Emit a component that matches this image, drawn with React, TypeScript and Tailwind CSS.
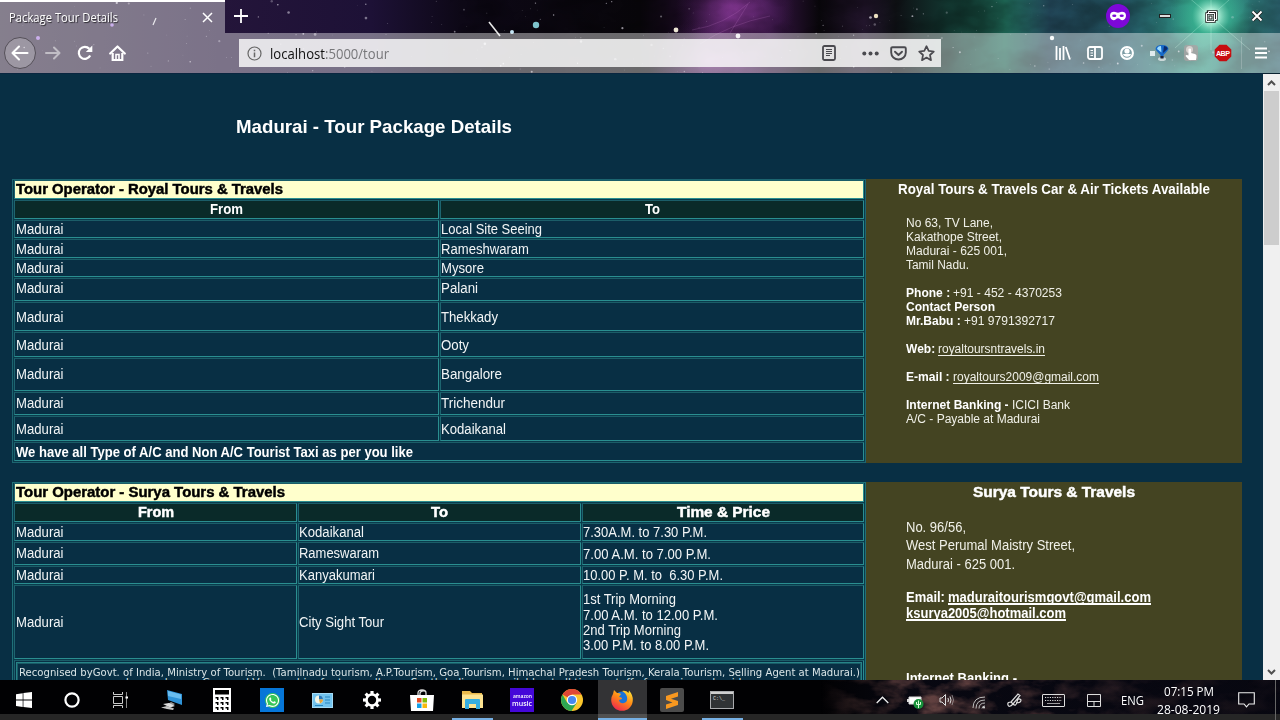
import { useLayoutEffect, useRef, useState, type ReactNode } from 'react';
import { FaWhatsapp } from 'react-icons/fa';

/** Inline text that is condensed or expanded so that it takes up `w` pixels. */
function Fit({ w, className = '', children }: { w: number; className?: string; children: string }) {
  const ref = useRef<HTMLSpanElement>(null);
  const [natural, setNatural] = useState(w);
  useLayoutEffect(() => {
    const el = ref.current;
    if (!el) return;
    const applied = el.style.transform;
    el.style.transform = 'none';
    setNatural(el.getBoundingClientRect().width);
    el.style.transform = applied;
  }, [w, children]);
  return (
    <span
      ref={ref}
      className={`inline-block origin-left whitespace-pre ${className}`}
      style={{ transform: `scaleX(${w / natural})`, marginRight: `${w - natural}px` }}
    >
      {children}
    </span>
  );
}

function makeStars(count: number, seed: number, width: number, height: number) {
  let s = seed;
  const next = () => {
    s = (s * 16807) % 2147483647;
    return s / 2147483647;
  };
  return Array.from({ length: count }, () => ({
    x: next() * width,
    y: next() * height,
    r: 0.3 + Math.pow(next(), 4) * 1.1,
    o: 0.25 + next() * 0.5,
  }));
}
const stars = makeStars(230, 4217, 1280, 73);

function Galaxy() {
  return (
    <svg className="absolute inset-0 h-full w-full" viewBox="0 0 1280 73" preserveAspectRatio="none" aria-hidden="true">
      <defs>
        <linearGradient id="sky" x1="0" x2="1" y1="0" y2="0">
          <stop offset="0" stopColor="#352a42" />
          <stop offset="0.17" stopColor="#24153a" />
          <stop offset="0.29" stopColor="#1d1136" />
          <stop offset="0.36" stopColor="#0d0816" />
          <stop offset="0.5" stopColor="#08060a" />
          <stop offset="0.54" stopColor="#1c0b24" />
          <stop offset="0.575" stopColor="#5a2368" />
          <stop offset="0.605" stopColor="#331440" />
          <stop offset="0.64" stopColor="#08060a" />
          <stop offset="0.675" stopColor="#22152c" />
          <stop offset="0.7" stopColor="#0e1014" />
          <stop offset="0.74" stopColor="#12352f" />
          <stop offset="0.785" stopColor="#1f6a58" />
          <stop offset="0.82" stopColor="#224658" />
          <stop offset="0.88" stopColor="#265c6a" />
          <stop offset="0.94" stopColor="#2f9480" />
          <stop offset="1" stopColor="#2c6470" />
        </linearGradient>
        <radialGradient id="glow">
          <stop offset="0" stopColor="#ffffff" />
          <stop offset="0.15" stopColor="#c8ffe8" stopOpacity="0.9" />
          <stop offset="0.45" stopColor="#3fc79c" stopOpacity="0.5" />
          <stop offset="1" stopColor="#3fc79c" stopOpacity="0" />
        </radialGradient>
        <radialGradient id="violet">
          <stop offset="0" stopColor="#b04cc0" stopOpacity="0.5" />
          <stop offset="1" stopColor="#6a2a80" stopOpacity="0" />
        </radialGradient>
        <filter id="clouds" x="0" y="0" width="100%" height="100%">
          <feTurbulence type="fractalNoise" baseFrequency="0.018 0.03" numOctaves="4" seed="8" />
          <feColorMatrix values="0 0 0 0 0  0 0 0 0 0  0 0 0 0 0  2.6 0 0 0 -1" />
        </filter>
      </defs>
      <rect width="1280" height="73" fill="url(#sky)" />
      <ellipse cx="735" cy="10" rx="60" ry="46" fill="url(#violet)" />
      <ellipse cx="708" cy="62" rx="60" ry="42" fill="url(#violet)" />
      <rect x="450" width="830" height="73" filter="url(#clouds)" opacity="0.32" />
      <g stroke="#d78be0" strokeOpacity="0.18" fill="none">
        <path d="M692 30 Q725 25 750 2M700 44 Q730 24 770 16M730 33 L748 4" />
      </g>
      <circle cx="1211" cy="16" r="42" fill="url(#glow)" />
      <path d="M1175 48L1247 -16M1180 -10L1250 50M1211 0V50" stroke="#bfffe6" strokeOpacity="0.3" />
      {stars.map((p, i) => (
        <circle key={i} cx={p.x} cy={p.y} r={p.r} fill="#e8e4f0" opacity={p.o} />
      ))}
      <path d="M489 22L500 36" stroke="#e8e8e8" strokeWidth="1.6" />
      <path d="M153 25L156 18" stroke="#dddde4" strokeWidth="1.2" />
      <circle cx="536" cy="25" r="3.2" fill="#7fc4cc" />
      <circle cx="512" cy="32" r="2" fill="#c3e4f4" />
      <circle cx="676" cy="30" r="2.4" fill="#ece6d4" />
      <circle cx="738" cy="36" r="2.4" fill="#efe8ee" />
      <circle cx="876" cy="16" r="2.2" fill="#ece0c0" />
      <circle cx="1052" cy="38" r="2.2" fill="#f4f8f8" />
      <circle cx="38" cy="38" r="2" fill="#a97be0" />
      <circle cx="112" cy="25" r="1.8" fill="#a97be0" />
    </svg>
  );
}

function TabStrip() {
  return (
    <div className="relative flex h-[33px]">
      <div className="flex h-full w-[225px] items-center border-t-2 border-white bg-white/40 pl-[9px] text-[12px] text-white">
        <Fit w={109} className="font-['Open_Sans',sans-serif] [text-shadow:1px_1px_1px_#000a]">Package Tour Details</Fit>
        <svg className="ml-auto mr-[12px]" width="11" height="11" viewBox="0 0 11 11" stroke="#fff" strokeWidth="1.5">
          <path d="M1 1L10 10M10 1L1 10" />
        </svg>
      </div>
      <svg className="ml-[9px] mt-[9px]" width="14" height="14" viewBox="0 0 14 14" stroke="#fff" strokeWidth="1.8">
        <path d="M7 0V14M0 7H14" />
      </svg>
      <div className="ml-auto flex h-[32px] items-center">
        <div className="flex w-12 justify-center">
          <svg width="24" height="24" viewBox="0 0 24 24">
            <circle cx="12" cy="12" r="12" fill="#7d08d8" />
            <path d="M4 11.500C4 8.700 6 7.800 8 7.800c1.700 0 2.600.9 4 .9s2.300-.9 4-.9c2 0 4 .9 4 3.700 0 2.700-1.400 4.700-3.600 4.700-2 0-2.700-2-4.400-2s-2.400 2-4.400 2C5.400 16.200 4 14.200 4 11.500z" fill="#fff" />
            <ellipse cx="8.300" cy="11.800" rx="2.100" ry="1.300" fill="#7d08d8" />
            <ellipse cx="15.700" cy="11.800" rx="2.100" ry="1.300" fill="#7d08d8" />
          </svg>
        </div>
        <div className="flex w-[46px] justify-center">
          <svg width="12" height="4" viewBox="0 0 12 4"><rect x="0.500" y="0.500" width="11" height="3" fill="#ddd" stroke="#222" /></svg>
        </div>
        <div className="flex w-[46px] justify-center">
          <svg width="13" height="13" viewBox="0 0 13 13" fill="none">
            <path d="M3 3V1.500H11.500V9.500H10M1.500 3.500H9.500V11.500H1.500z" stroke="#222" strokeWidth="2.400" />
            <path d="M3.500 3V1.500H11.500V9.500H10M1.500 3.500H9.500V11.500H1.500z" stroke="#fff" strokeWidth="1" />
            <rect x="4" y="6" width="3" height="3" stroke="#222" fill="#fff" />
          </svg>
        </div>
        <div className="flex w-[46px] justify-center">
          <svg width="12" height="12" viewBox="0 0 12 12">
            <path d="M1.500 1.500L10.500 10.500M10.500 1.500L1.500 10.500" stroke="#222" strokeWidth="3.600" />
            <path d="M1.500 1.500L10.500 10.500M10.500 1.500L1.500 10.500" stroke="#fff" strokeWidth="1.900" />
          </svg>
        </div>
      </div>
    </div>
  );
}

function Slot({ children }: { children: ReactNode }) {
  return <div className="flex w-8 shrink-0 justify-center">{children}</div>;
}

function Toolbar() {
  return (
    <div className="relative flex h-10 items-center bg-white/40 text-white">
      <div className="flex items-center pl-1">
        <div className="flex size-8 items-center justify-center rounded-full border border-[#555059] bg-white/20">
          <svg width="18" height="16" viewBox="0 0 18 16" fill="none" stroke="#fff" strokeWidth="2.100" strokeLinecap="round" strokeLinejoin="round">
            <path d="M16.500 8H2M8 1.500L1.500 8L8 14.500" />
          </svg>
        </div>
        <div className="w-px" />
        <Slot>
          <svg className="opacity-50" width="16" height="14" viewBox="0 0 16 14" fill="none" stroke="#fff" strokeWidth="2" strokeLinecap="round" strokeLinejoin="round">
            <path d="M1 7H14M9 1.500L14.500 7L9 12.500" />
          </svg>
        </Slot>
        <Slot>
          <svg width="16" height="16" viewBox="0 0 16 16" fill="none" stroke="#fff" strokeWidth="2.200">
            <path d="M13.200 10.500A6 6 0 1 1 12.300 3.800" />
            <path d="M15.300 0.500V7H8.800z" fill="#fff" stroke="none" />
          </svg>
        </Slot>
        <Slot>
          <svg width="17" height="17" viewBox="0 0 17 17" fill="none" stroke="#fff">
            <path d="M1.200 8.500L8.500 1.500L15.800 8.500" strokeWidth="2.200" strokeLinecap="round" strokeLinejoin="round" />
            <path d="M3.700 8V15H13.300V8" strokeWidth="2.200" />
            <path d="M7 15.500V9.500H10V15.500" strokeWidth="1.600" />
          </svg>
        </Slot>
      </div>
      <div className="ml-[106px] flex h-7 w-[702px] items-center bg-white/80 text-[#444]">
        <svg className="ml-2" width="15" height="15" viewBox="0 0 15 15" fill="none" stroke="#666" strokeWidth="1.200">
          <circle cx="7.500" cy="7.500" r="6.500" />
          <path d="M7.500 6.500V11.300M7.500 3.700V5.200" strokeWidth="1.500" />
        </svg>
        <span className="ml-[8px] flex font-['Open_Sans',sans-serif] text-[14px]">
          <Fit w={55} className="text-[#111]">localhost</Fit>
          <Fit w={64} className="text-[#77777a]">:5000/tour</Fit>
        </span>
        <svg className="ml-auto" width="14" height="16" viewBox="0 0 14 16" fill="none" stroke="#4a4a4f">
          <rect x="1" y="1" width="12" height="14" rx="1.500" strokeWidth="1.800" />
          <path d="M4 4.500H10M4 6.500H10M4 8.500H10M4 10.500H8" />
        </svg>
        <svg className="ml-[26px]" width="17" height="5" viewBox="0 0 17 5" fill="#4a4a4f">
          <circle cx="2.300" cy="2.500" r="2" /><circle cx="8.500" cy="2.500" r="2" /><circle cx="14.700" cy="2.500" r="2" />
        </svg>
        <svg className="ml-[11px]" width="17" height="15" viewBox="0 0 17 15" fill="none" stroke="#4a4a4f" strokeWidth="1.900" strokeLinecap="round" strokeLinejoin="round">
          <path d="M2.500 1.200H14.500Q15.800 1.200 15.800 2.500V6.500A7.300 7 0 0 1 1.200 6.500V2.500Q1.200 1.200 2.500 1.200z" />
          <path d="M5 5.700L8.500 9L12 5.700" />
        </svg>
        <svg className="ml-[11px] mr-[6px]" width="17" height="17" viewBox="0 0 17 17" fill="none" stroke="#4a4a4f" strokeWidth="1.700" strokeLinejoin="round">
          <path d="M8.500 1.200L10.700 5.900L15.800 6.500L12 10L13 15.200L8.500 12.600L4 15.200L5 10L1.200 6.500L6.300 5.900z" />
        </svg>
      </div>
      <div className="ml-auto flex items-center">
        <Slot>
          <svg width="16" height="14" viewBox="0 0 16 14" stroke="#fff" strokeWidth="1.800">
            <path d="M1.500 0V14M5 2V14M8.500 0V14M10.800 1L15 13.500" />
          </svg>
        </Slot>
        <Slot>
          <svg width="16" height="14" viewBox="0 0 16 14" fill="none" stroke="#fff" strokeWidth="1.800">
            <rect x="1" y="1" width="14" height="12" rx="2" />
            <path d="M8 1V13" />
            <path d="M3.500 4.500H6M3.500 7H6M3.500 9.500H6" strokeWidth="1.200" />
          </svg>
        </Slot>
        <Slot>
          <svg width="14" height="14" viewBox="0 0 14 14">
            <circle cx="7" cy="7" r="5.900" fill="none" stroke="#fff" strokeWidth="2.100" />
            <circle cx="7" cy="5" r="2.600" fill="#fff" />
            <path d="M3 8H11Q10.500 10.800 7 10.800T3 8z" fill="#fff" />
          </svg>
        </Slot>
        <Slot>
          <svg width="24" height="18" viewBox="0 0 24 18">
            <rect x="3" y="7" width="5" height="5" fill="#f3f8fa" opacity="0.850" />
            <ellipse cx="15" cy="15" rx="4" ry="2" fill="#fff" opacity="0.600" />
            <path d="M8.500 5Q9 1 15 1T21.500 5Q21 6.500 16.500 11V14H13.500V11Q9 6.500 8.500 5z" fill="#1568c8" />
            <path d="M10 5Q10.500 2 14 2L14.500 8.500z" fill="#9edcff" />
            <path d="M17 2Q21 3 20.500 5L16 9z" fill="#0a2a6c" />
            <rect x="13.500" y="12" width="3" height="2.500" fill="#223" />
          </svg>
        </Slot>
        <Slot>
          <svg width="16" height="16" viewBox="0 0 16 16">
            <rect x="1" y="0" width="14" height="16" rx="3" fill="#a8a4a4" opacity="0.800" />
            <circle cx="6.500" cy="4.500" r="3.500" fill="#d6d0ce" />
            <path d="M5.500 4Q7 2.800 8 4V8L12 9Q14 9.500 13.500 12L13 15H6L2.500 11Q3 9.500 5.500 10.500z" fill="#fff" />
          </svg>
        </Slot>
        <Slot>
          <svg width="18" height="18" viewBox="0 0 18 18">
            <path d="M5.500 0.700H12.500L17.300 5.500V12.500L12.500 17.300H5.500L0.700 12.500V5.500z" fill="#c70d10" />
            <text x="9" y="11.700" textAnchor="middle" fontFamily="Liberation Sans, sans-serif" fontWeight="700" fontSize="7.200" textLength="14" fill="#fff">ABP</text>
          </svg>
        </Slot>
        <div className="ml-[2px] flex h-8 w-[39px] items-center border-l border-white/20 pl-3">
          <svg width="14" height="12" viewBox="0 0 14 12" stroke="#fff" strokeWidth="1.800"><path d="M1 1.500H13M1 6H13M1 10.500H13" /></svg>
        </div>
      </div>
    </div>
  );
}

function Cell({ className = '', children }: { className?: string; children?: ReactNode }) {
  return (
    <div className={`flex items-center overflow-hidden whitespace-pre border border-b-[#2a8e90] border-l-[#1d6570] border-r-[#2a8e90] border-t-[#1b5d68] ${className}`}>
      {children}
    </div>
  );
}

const body = "bg-[#082f44]";
const heading = "bg-[#0a2a29] justify-center font-bold text-white";
const title = "bg-[#ffffcc] text-black font-bold col-span-full pl-px";
const black = "font-bold [-webkit-text-stroke:0.45px_currentColor]";

const royalRows: [string, number][] = [
  ['Local Site Seeing', 101], ['Rameshwaram', 88], ['Mysore', 43], ['Palani', 37], ['Thekkady', 57],
  ['Ooty', 28], ['Bangalore', 61], ['Trichendur', 64], ['Kodaikanal', 65],
];
const lowered = ['Rameshwaram', 'Thekkady', 'Ooty', 'Kodaikanal'];

function nudge(to: string) {
  if (to === 'Palani') return 'pb-[3px]';
  if (lowered.includes(to)) return 'pt-[2px]';
  return '';
}

function RoyalTable() {
  return (
    <div className="grid w-[854px] shrink-0 grid-cols-[425px_424px] grid-rows-[19px_19px_18px_19px_18px_23px_29px_25px_33px_23px_25px_19px] gap-px border border-[#1c6570] bg-[#0a3b4c] px-px pb-px text-[14px] text-[#f2f5f6]">
      <Cell className={title}><Fit w={267} className={black}>Tour Operator - Royal Tours &amp; Travels</Fit></Cell>
      <Cell className={heading}><Fit w={33}>From</Fit></Cell>
      <Cell className={heading}><Fit w={15}>To</Fit></Cell>
      {royalRows.map(([to, w]) => (
        <div key={to} className="contents">
          <Cell className={`${body} pl-px ${nudge(to)}`}><Fit w={47.5}>Madurai</Fit></Cell>
          <Cell className={`${body} ${nudge(to)}`}><Fit w={w}>{to}</Fit></Cell>
        </div>
      ))}
      <Cell className={`col-span-full pl-px pt-[2px] font-bold text-white ${body}`}><Fit w={397}>We have all Type of A/C and Non A/C Tourist Taxi as per you like</Fit></Cell>
    </div>
  );
}

const suryaRows: [string, number, string, number][] = [
  ['Kodaikanal', 65, '7.30A.M. to 7.30 P.M.', 124],
  ['Rameswaram', 80, '7.00 A.M. to 7.00 P.M.', 128],
  ['Kanyakumari', 76, '10.00 P. M. to  6.30 P.M.', 140],
];

function SuryaTable() {
  return (
    <div className="grid w-[854px] shrink-0 grid-cols-[283px_283px_282px] grid-rows-[19px_19px_18px_23px_18px_74px_60px] gap-px border border-[#1f7078] bg-[#0a3b4c] px-px pb-px text-[14px] text-[#f2f5f6]">
      <Cell className={title}><Fit w={269} className={black}>Tour Operator - Surya Tours &amp; Travels</Fit></Cell>
      <Cell className={heading}><Fit w={36} className={black}>From</Fit></Cell>
      <Cell className={heading}><Fit w={17} className={black}>To</Fit></Cell>
      <Cell className={heading}><Fit w={93} className={black}>Time &amp; Price</Fit></Cell>
      {suryaRows.map(([to, w, time, tw]) => (
        <div key={to} className="contents">
          <Cell className={`${body} pl-px`}><Fit w={47.5}>Madurai</Fit></Cell>
          <Cell className={body}><Fit w={w}>{to}</Fit></Cell>
          <Cell className={`${body} ${to === 'Rameswaram' ? 'pt-[2px]' : ''}`}><Fit w={tw}>{time}</Fit></Cell>
        </div>
      ))}
      <Cell className={`${body} pl-px`}><Fit w={47.5}>Madurai</Fit></Cell>
      <Cell className={body}><Fit w={85}>City Sight Tour</Fit></Cell>
      <Cell className={body}>
        <div className="flex flex-col items-start pt-[2px] leading-[15.4px]">
          <Fit w={93}>1st Trip Morning</Fit>
          <Fit w={135}>7.00 A.M. to 12.00 P.M.</Fit>
          <Fit w={98}>2nd Trip Morning</Fit>
          <Fit w={126}>3.00 P.M. to 8.00 P.M.</Fit>
        </div>
      </Cell>
      <Cell className={`col-span-full p-px ${body}`}>
        <div className="h-full w-full border border-[#278487]">
          <div className="h-full border border-[#195b66] pl-px font-['DejaVu_Sans',sans-serif] text-[10.500px] leading-[13px] text-[#d9e4e6]">
            <Fit w={841} className="pt-[2px]">Recognised byGovt. of India, Ministry of Tourism.  (Tamilnadu tourism, A.P.Tourism, Goa Tourism, Himachal Pradesh Tourism, Kerala Tourism, Selling Agent at Madurai.)</Fit>
            <div className="-mt-[3px] text-center">Luxury buses, Cars and Vans on hire for tours all over South India are available at all times, staff of experienced guides</div>
          </div>
        </div>
      </Cell>
    </div>
  );
}

const link = "underline underline-offset-2 [text-decoration-skip-ink:none]";
const boldLink = "underline decoration-2 underline-offset-1 [text-decoration-skip-ink:none]";

function RoyalContact() {
  return (
    <div className="w-[376px] shrink-0 overflow-hidden bg-[#444422] text-[12px] leading-[14px] text-[#f0f0e8]">
      <div className="h-[37px] pt-[3px] text-center text-[14px] font-bold text-white"><Fit w={312}>Royal Tours &amp; Travels Car &amp; Air Tickets Available</Fit></div>
      <div className="flex flex-col gap-[14px] whitespace-pre pl-[39.500px]">
        <div>
          <div><Fit w={87}>No 63, TV Lane,</Fit></div>
          <div><Fit w={96}>Kakathope Street,</Fit></div>
          <div><Fit w={101}>Madurai - 625 001,</Fit></div>
          <div><Fit w={63}>Tamil Nadu.</Fit></div>
        </div>
        <div>
          <div className="flex"><Fit w={47.500} className="font-bold text-white">Phone : </Fit><Fit w={109}>+91 - 452 - 4370253</Fit></div>
          <div className="font-bold text-white"><Fit w={89}>Contact Person</Fit></div>
          <div className="flex"><Fit w={58} className="font-bold text-white">Mr.Babu : </Fit><Fit w={91}>+91 9791392717</Fit></div>
        </div>
        <div className="flex"><Fit w={32.500} className="font-bold text-white">Web: </Fit><a><Fit w={107} className={link}>royaltoursntravels.in</Fit></a></div>
        <div className="flex"><Fit w={47} className="font-bold text-white">E-mail : </Fit><a><Fit w={146} className={link}>royaltours2009@gmail.com</Fit></a></div>
        <div>
          <div className="flex"><Fit w={106} className="font-bold text-white">Internet Banking - </Fit><Fit w={58}>ICICI Bank</Fit></div>
          <div><Fit w={134}>A/C - Payable at Madurai</Fit></div>
        </div>
      </div>
    </div>
  );
}

function SuryaContact() {
  return (
    <div className="w-[376px] shrink-0 overflow-hidden bg-[#444422] text-[14px] leading-[18.300px] text-[#f0f0e8]">
      <div className="h-[36px] pt-[1px] text-center text-white"><Fit w={162} className={black}>Surya Tours &amp; Travels</Fit></div>
      <div className="flex flex-col items-start whitespace-pre pl-[39.500px]">
        <Fit w={60}>No. 96/56,</Fit>
        <Fit w={169}>West Perumal Maistry Street,</Fit>
        <Fit w={109}>Madurai - 625 001.</Fit>
        <div className="mt-[16.500px] flex flex-col font-bold leading-4 text-white">
          <div className="flex"><Fit w={42.500}>Email: </Fit><a><Fit w={203} className={boldLink}>maduraitourismgovt@gmail.com</Fit></a></div>
          <a className="h-4"><Fit w={160} className={boldLink}>ksurya2005@hotmail.com</Fit></a>
          <div className="mt-[49px]"><Fit w={111}>Internet Banking -</Fit></div>
        </div>
      </div>
    </div>
  );
}

function Scrollbar() {
  return (
    <div className="flex w-[17px] shrink-0 flex-col items-center border-t border-[#0a2230] bg-[#f0f0f0]">
      <div className="flex h-[17px] items-center"><svg width="9" height="6" viewBox="0 0 9 6" fill="none" stroke="#505050" strokeWidth="2"><path d="M1 5L4.500 1.500L8 5" /></svg></div>
      <div className="h-[154px] w-[15px] bg-[#cdcdcd]" />
      <div className="mt-auto flex h-[17px] items-center"><svg width="9" height="6" viewBox="0 0 9 6" fill="none" stroke="#505050" strokeWidth="2"><path d="M1 1L4.500 4.500L8 1" /></svg></div>
    </div>
  );
}

function Task({ wide, active, running, children }: { wide?: boolean; active?: boolean; running?: boolean; children: ReactNode }) {
  return (
    <div className={`relative flex h-10 shrink-0 justify-center ${wide ? 'w-12' : 'w-[50px]'}`}>
      <div className={`flex h-10 items-center justify-center ${active ? 'w-[49px] bg-white/20' : 'w-[41px]'} ${running || active ? 'border-b-2 border-[#76b0e4] pt-[2px]' : ''}`}>{children}</div>
    </div>
  );
}

function Taskbar() {
  return (
    <div className="relative flex h-10 overflow-hidden bg-[linear-gradient(#010103_0_34px,#262626_34px)]">
      <svg className="absolute right-0 top-0" width="460" height="34" viewBox="0 0 460 34" aria-hidden="true">
        <defs>
          <filter id="rust" x="0" y="0" width="100%" height="100%">
            <feTurbulence type="fractalNoise" baseFrequency="0.03 0.06" numOctaves="4" seed="3" />
            <feColorMatrix values="0 0 0 0 0.320  0 0 0 0 0.130  0 0 0 0 0.110  2.600 0 0 0 -1.050" />
          </filter>
          <linearGradient id="base"><stop offset="0" stopColor="#090914" stopOpacity="0" /><stop offset="0.2" stopColor="#090914" /></linearGradient>
          <linearGradient id="fade"><stop offset="0" stopColor="#000" /><stop offset="0.200" stopColor="#ccc" /><stop offset="0.400" stopColor="#aaa" /><stop offset="0.600" stopColor="#444" /><stop offset="1" stopColor="#111" /></linearGradient>
          <mask id="m"><rect width="460" height="34" fill="url(#fade)" /></mask>
        </defs>
        <rect width="460" height="34" fill="url(#base)" opacity="0.800" />
        <g mask="url(#m)"><rect width="460" height="34" filter="url(#rust)" opacity="0.800" /></g>
      </svg>
      <Task wide>
        <svg width="16" height="16" viewBox="0 0 16 16" fill="#fff"><path d="M0 2.200L6.700 1.200V7.600H0zM7.400 1.100L16 0V7.600H7.400zM0 8.400H6.700V14.900L0 13.900zM7.400 8.400H16V16L7.400 15z" /></svg>
      </Task>
      <Task wide>
        <svg width="16" height="16" viewBox="0 0 16 16"><circle cx="8" cy="8" r="6.600" fill="none" stroke="#fff" strokeWidth="2.200" /></svg>
      </Task>
      <Task wide>
        <svg width="17" height="16" viewBox="0 0 17 16" fill="none" stroke="#ccc">
          <path d="M1.500 0V2.500H10.500V0M1.500 4.500H10.500V11.500H1.500zM1.500 16V13.500H10.500V16" />
          <path d="M14.500 0V16" stroke="#888" />
          <path d="M13.500 5.500H16" strokeWidth="2" stroke="#fff" />
        </svg>
      </Task>
      <div className="w-[3px] shrink-0" />
      <Task>
        <svg width="22" height="22" viewBox="0 0 22 22">
          <path d="M6 1L21 5V16L7 11z" fill="#2f93d8" /><path d="M7 2L20 5.500V10L7 7z" fill="#69bdf0" />
          <path d="M10 13L14 15L11 17L7 15z" fill="#999" /><path d="M2 15L8 14L14 17L9 18.500z" fill="#dedede" /><path d="M0 18.500L6 17L13 19.500L12 21L6 20z" fill="#c6c6c6" />
        </svg>
      </Task>
      <Task>
        <svg width="18" height="24" viewBox="0 0 18 24">
          <rect width="18" height="24" fill="#fff" /><rect x="2" y="2" width="14" height="4.500" fill="#000" />
          {[9, 14, 19].map((y) => [2.5, 7.5, 12.5].map((x) => <path key={`${x}-${y}`} d={`M${x} ${y}h3v3h-1.500v-1.500h-1.500z`} fill="#000" />))}
        </svg>
      </Task>
      <Task>
        <div className="flex size-6 items-center justify-center bg-[#0676d8]">
          <span className="flex size-[15px] items-center justify-center rounded-full bg-[#35c759] text-white"><FaWhatsapp size={15} /></span>
        </div>
      </Task>
      <Task>
        <svg width="21" height="15" viewBox="0 0 21 15">
          <rect x="0.500" y="0.500" width="20" height="14" fill="#72c3ee" stroke="#a5dbf6" />
          <circle cx="7" cy="6.500" r="4" fill="#f3f6e8" /><path d="M7 6.500V2.500A4 4 0 0 1 11 6.500z" fill="#2878bc" /><path d="M7 6.500H11A4 4 0 0 1 8 10.400z" fill="#e7a63b" />
          <path d="M13 4H18M13 7H18M13 10H18M3 12.500H11" stroke="#2685bf" />
        </svg>
      </Task>
      <Task>
        <svg width="20" height="20" viewBox="0 0 20 20" fill="none" stroke="#fff">
          <circle cx="10" cy="10" r="5.500" strokeWidth="2.600" />
          {[0, 45, 90, 135, 180, 225, 270, 315].map((a) => <path key={a} d="M10 1V4.500" strokeWidth="3.200" transform={`rotate(${a} 10 10)`} />)}
        </svg>
      </Task>
      <Task>
        <svg width="24" height="23" viewBox="0 0 24 23">
          <path d="M8 7V4Q8 1 12 1T16 4V7M10 7V4Q11 1 15 2" fill="none" stroke="#ddd" strokeWidth="1.300" />
          <path d="M0 6H24L23 22H1z" fill="#fff" />
          <path d="M7 9H11.500V13.500H7z" fill="#e64b24" /><path d="M12.500 9H17V13.500H12.500z" fill="#80bc06" /><path d="M7 14.500H11.500V19H7z" fill="#12a0e8" /><path d="M12.500 14.500H17V19H12.500z" fill="#f8b90d" />
        </svg>
      </Task>
      <Task running>
        <svg width="21" height="18" viewBox="0 0 21 18">
          <path d="M0 0H8L10 2H20V8H0z" fill="#e9b94c" /><path d="M0 3.500H21V17H0z" fill="#fde391" />
          <path d="M3 9Q3 8 4 8H17Q18 8 18 9V18H14V13H7V18H3z" fill="#37aee0" />
        </svg>
      </Task>
      <Task>
        <div className="flex size-6 flex-col items-center justify-center bg-[#4407d8] font-['Open_Sans',sans-serif] font-semibold leading-[8px] text-white">
          <Fit w={19} className="text-[6px]">amazon</Fit>
          <Fit w={20} className="text-[7px]">music</Fit>
        </div>
      </Task>
      <Task>
        <svg width="22" height="22" viewBox="0 0 22 22">
          <circle cx="11" cy="11" r="11" fill="#fbc62d" />
          <path d="M11 11L1.500 5.500A11 11 0 0 1 20.500 5.500H11z" fill="#df4736" />
          <path d="M1.500 5.500A11 11 0 0 0 10.500 22L15.800 13.800L11 11L6.200 13.700z" fill="#2da653" />
          <circle cx="11" cy="11" r="5.200" fill="#fff" /><circle cx="11" cy="11" r="4.100" fill="#4688ef" />
        </svg>
      </Task>
      <Task active>
        <svg width="22" height="22" viewBox="0 0 22 22">
          <defs>
            <linearGradient id="fox" x1="0.800" y1="0" x2="0.200" y2="1"><stop offset="0" stopColor="#ffe236" /><stop offset="0.450" stopColor="#ff8a16" /><stop offset="1" stopColor="#ef1f53" /></linearGradient>
          </defs>
          <circle cx="11" cy="10" r="7.500" fill="#1a73d8" />
          <path d="M2 5L3 1L6 4Q8 3.500 10 5L8 8Q11 8 11 10L8 11Q9 15 13 14Q17 13 16 8Q15 4 11 2Q15 1 17.500 4L18 1.500Q22 6 21.800 11A10.800 10.800 0 0 1 .2 11Q0 8 2 5z" fill="url(#fox)" />
        </svg>
      </Task>
      <Task>
        <svg width="24" height="24" viewBox="0 0 24 24">
          <rect width="24" height="24" rx="2" fill="#4b4b4b" />
          <path d="M18 4V8.500L11 10.700L18 13V17L6 21V16.500L12.500 14.400L6 12V8z" fill="#f89820" />
        </svg>
      </Task>
      <Task running>
        <svg width="24" height="18" viewBox="0 0 24 18">
          <rect x="0.500" y="0.500" width="23" height="17" fill="#303335" stroke="#a9abad" /><path d="M1 2H23" stroke="#cfcfcf" strokeWidth="2" />
          <text x="3" y="9" fontSize="5" fontFamily="Liberation Mono, monospace" fill="#ddd">C:\_</text>
        </svg>
      </Task>

      <div className="relative ml-auto flex items-center text-[#eee]">
        <svg className="mr-[18px]" width="13" height="8" viewBox="0 0 13 8" fill="none" stroke="#eee" strokeWidth="1.300"><path d="M0.700 7L6.500 1.200L12.300 7" /></svg>
        <svg className="mr-[15px] mt-1" width="17" height="13" viewBox="0 0 17 13">
          <path d="M2 1H14V8H2z" fill="#fff" stroke="#ddd" /><rect x="0" y="3" width="2" height="3" fill="#ddd" />
          <circle cx="11.500" cy="8" r="5" fill="#17913a" /><path d="M11.500 4.500V12M9.500 6V8.500H13.500V6" fill="none" stroke="#d8ffd8" />
        </svg>
        <svg className="mr-[17px]" width="16" height="14" viewBox="0 0 16 14" fill="none" stroke="#ddd">
          <path d="M1 5H3L6.500 1.500V12.500L3 9H1zM9 5Q10 7 9 9M11 3.500Q13 7 11 10.500" /><path d="M13 2Q16 7 13 12" opacity="0.500" />
        </svg>
        <svg className="mr-[21px] mt-1" width="14" height="13" viewBox="0 0 14 13" fill="none" stroke="#bbb">
          <path d="M1 12Q1 1 13 1M4 12.500Q4 4 13 4M7 12.500Q7 7 13 7M10 12.500Q10 10 13 10" /><circle cx="12" cy="11.500" r="1" fill="#ddd" stroke="none" />
        </svg>
        <svg className="mr-[20px]" width="15" height="15" viewBox="0 0 15 15" fill="none" stroke="#ddd" strokeWidth="1.200">
          <path d="M4 9L11 1L13 2.500L6 11zM4 9Q0 9 1 12T6 11M6 11Q9 14 10 9T14 7Q14 10 9 10" />
        </svg>
        <svg className="mr-[22px]" width="23" height="13" viewBox="0 0 23 13" fill="none" stroke="#ddd">
          <rect x="0.500" y="0.500" width="22" height="12" rx="0.500" /><path d="M3 3.500H20M3 6.500H20" strokeDasharray="1.200 1.200" /><path d="M5 9.500H18" strokeOpacity="0.700" />
        </svg>
        <svg className="mr-[20px]" width="14" height="13" viewBox="0 0 14 13" fill="none" stroke="#ddd"><path d="M0.500 0.500H13.500V12.500H0.500zM0.500 7.500H13.500M7 7.500V12.500" /></svg>
        <span className="mr-[13px] pt-px font-['Open_Sans',sans-serif] text-[12px] text-white"><Fit w={23}>ENG</Fit></span>
        <div className="mr-[18px] flex w-[63px] flex-col items-center self-start pt-[2.500px] font-['Open_Sans',sans-serif] text-[12px] leading-[18.500px] text-white">
          <Fit w={50}>07:15 PM</Fit>
          <Fit w={63}>28-08-2019</Fit>
        </div>
        <svg className="mr-[20px]" width="17" height="16" viewBox="0 0 17 16" fill="none" stroke="#eee" strokeWidth="1.100"><path d="M0.700 0.700H16.300V12H11L8.500 14.800L6 12H0.700z" /></svg>
        <div className="mr-[4px] h-10 w-px bg-[#666]" />
      </div>
    </div>
  );
}

export default function App() {
  return (
    <div className="flex h-[720px] w-[1280px] flex-col overflow-hidden bg-black font-['Liberation_Sans',Arial,sans-serif]">
      <header className="relative h-[73px] shrink-0 overflow-hidden">
        <Galaxy />
        <TabStrip />
        <Toolbar />
      </header>
      <main className="flex h-[607px] shrink-0 bg-[#082f44]">
        <div className="flex flex-1 flex-col overflow-hidden border-t border-[#0a2640] pl-3">
          <h1 className="h-[105px] shrink-0 pl-[224px] pt-[41px] text-[19px] font-bold leading-6 text-white"><Fit w={276}>Madurai - Tour Package Details</Fit></h1>
          <section className="flex h-[284px] shrink-0"><RoyalTable /><RoyalContact /></section>
          <section className="mt-[19px] flex shrink-0"><SuryaTable /><SuryaContact /></section>
        </div>
        <Scrollbar />
      </main>
      <Taskbar />
    </div>
  );
}
